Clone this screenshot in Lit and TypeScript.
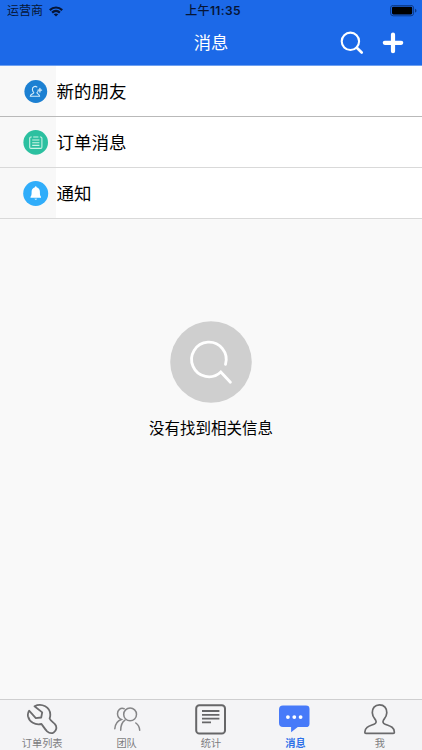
import { LitElement, html, css, svg } from "lit";
import { customElement } from "lit/decorators.js";

const wifi = svg`<svg class="wifi" width="14" height="11" viewBox="0 0 14 11" fill="none" stroke="#061536" stroke-width="2.2">
  <path d="M.8 4.1C4.4.6 9.6.6 13.2 4.1"/><path d="M3.1 6.6C5.4 4.4 8.6 4.4 10.9 6.6"/>
  <path d="M7 10.6L4.7 8.3Q7 6.5 9.3 8.3Z" fill="#061536" stroke="none"/></svg>`;

const battery = svg`<svg class="battery" width="27" height="12" viewBox="0 0 27 12">
  <rect x=".6" y=".4" width="23" height="10.4" rx="2.6" fill="none" stroke="#0c3a88" stroke-width="1"/>
  <rect x="2" y="1.8" width="20.2" height="7.6" rx="1.3" fill="#000"/>
  <path d="M25 3.8Q26.5 4.4 26.5 5.7T25 7.6Z" fill="#0c3a88"/></svg>`;

const search = svg`<svg width="24" height="24" viewBox="0 0 24 24" fill="none" stroke="#fff">
  <circle cx="10.4" cy="10.3" r="8.7" stroke-width="2.1"/><path d="M16.8 16.8L21.7 21.5" stroke-width="2.7" stroke-linecap="round"/></svg>`;

const plus = svg`<svg width="22" height="22" viewBox="0 0 22 22" stroke="#fff" stroke-width="4.2" stroke-linecap="round">
  <path d="M11 2.6V19.2M2.8 10.8H19.2"/></svg>`;

const friend = svg`<svg width="26" height="26" viewBox="0 0 26 26" fill="none" stroke="#d4ebfa" stroke-width="1.1" stroke-linecap="round" stroke-linejoin="round">
  <circle cx="12.8" cy="12.5" r="11.4" fill="#1c80d2" stroke="none"/>
  <path d="M13.9 8C12 6.5 9.2 7.8 9.4 10.5C9.5 12.1 10.1 13 10.8 13.7C10.8 14.8 7.5 14.9 7.3 17.3H16.6C16.5 14.9 13.9 15 13.9 13.7C14.6 13.1 15 12.6 15.1 12"/>
  <path d="M16.9 9.3V13M15 11.1H18.6" stroke-width="1.3"/></svg>`;

const order = svg`<svg width="26" height="26" viewBox="0 0 26 26" fill="none" stroke="#c9f3e5" stroke-width="1.1" stroke-linejoin="round">
  <circle cx="12.7" cy="12.4" r="12.3" fill="#2cc0a0" stroke="none"/>
  <path d="M8.7 7H7.9Q6.7 7 6.7 8.2V17.2Q6.7 18.4 7.9 18.4H17.7Q18.9 18.4 18.9 17.2V8.2Q18.9 7 17.7 7H16.9"/>
  <path d="M10.2 7H15.4M9.2 10H16.4M9.2 12.7H16.4M9.2 15.4H16.4"/></svg>`;

const bell = svg`<svg width="26" height="26" viewBox="0 0 26 26">
  <circle cx="12.7" cy="12.5" r="12.5" fill="#30adfa"/>
  <path d="M12.7 5.2C13.3 5.2 13.6 5.6 13.6 6.2C15.8 6.8 16.9 8.5 16.9 10.8C16.9 14.1 17.1 14.6 18 15.7V16.7H7.5V15.7C8.4 14.6 8.6 14.1 8.6 10.8C8.6 8.5 9.7 6.8 11.9 6.2C11.9 5.6 12.2 5.2 12.7 5.2Z" fill="#fff"/>
  <path d="M11.4 17.8H14.2Q12.8 19.5 11.4 17.8Z" fill="#fff"/></svg>`;

const emptyIcon = svg`<svg width="82" height="82" viewBox="0 0 82 82" fill="none" stroke="#fff" stroke-width="2.8" stroke-linecap="round">
  <circle cx="41" cy="41" r="40.8" fill="#cfcfcf" stroke="none"/>
  <path d="M55.5 43.3A17.3 17.3 0 1 0 50.8 51L60.4 61.2"/></svg>`;

const wrench = svg`<svg width="34" height="32" viewBox="0 0 34 32" fill="none" stroke="#6c6c6e" stroke-width="1.8" stroke-linejoin="round">
  <path d="M9.5 3.2C17 -.5 25.3 4.4 25.3 11.7C25.3 13.3 25 14.3 24.6 15.5C25.6 17.9 28.6 19.6 30.1 21.4C32.3 24 31.4 27.7 28.7 29.4C26.4 30.8 24 30 22.1 28.3C20 26.2 18.4 23.7 16.5 21C10 22.4 4.4 19.1 3 13.2C2.6 11.2 3.1 9.2 4.1 7.7L10.8 15.1L16.2 14.5L17.2 9.4Z"/></svg>`;

const team = svg`<svg width="34" height="32" viewBox="0 0 34 32" fill="none" stroke="#858587" stroke-width="1.5" stroke-linecap="round">
  <circle cx="20.1" cy="11.4" r="6.4"/><path d="M14.2 5.7C10.5 4.2 7.4 7.2 7.5 10.8C7.6 13.5 9 15.5 11.3 16.5C7.4 18 5.1 21 4.8 25.8M15 17.2C12.1 19.1 10.8 22.2 10.7 27.2M25.8 20C28.3 21.8 29.5 24.4 29.7 27.2"/></svg>`;

const stats = svg`<svg width="34" height="32" viewBox="0 0 34 32" fill="none" stroke="#666668">
  <rect x="2.2" y="2.2" width="28.8" height="28.4" rx="3.2" stroke-width="2"/>
  <path d="M8 8H25.4M8 11.8H25.4M8 15.6H25.4M8 19.4H17" stroke-width="1.8"/></svg>`;

const message = svg`<svg width="34" height="32" viewBox="0 0 34 32">
  <path d="M5 2.6H28Q31.5 2.6 31.5 6V20.7Q31.5 24.1 28 24.1H19.8L13.1 29.2V24.1H5Q1 24.1 1 20.1V6.6Q1 2.6 5 2.6Z" fill="#477af9"/>
  <g fill="#fff"><circle cx="9.9" cy="14.1" r="1.9"/><circle cx="16.3" cy="14.1" r="1.9"/><circle cx="22.6" cy="14.1" r="1.9"/></g></svg>`;

const me = svg`<svg width="34" height="32" viewBox="0 0 34 32" fill="none" stroke="#69696b" stroke-width="1.7" stroke-linejoin="round">
  <path d="M16.5 1.9C11.7 1.9 9.2 5.2 9.3 9.7C9.4 13.4 10.9 14.9 12.5 16.9C13.7 18.7 13.1 20.4 11 21.2C6 23.1 2 24 1.8 29.2Q1.8 30.4 3 30.4H30.2Q31.4 30.4 31.4 29.2C31.2 24 27.2 23.1 22.1 21.2C20 20.4 19.4 18.7 20.6 16.9C22.2 14.9 23.7 13.4 23.8 9.7C23.9 5.2 21.3 1.9 16.5 1.9Z"/></svg>`;

const rows = [
  { icon: friend, label: "新的朋友" },
  { icon: order, label: "订单消息" },
  { icon: bell, label: "通知" },
];
const tabs = [
  { icon: wrench, label: "订单列表" },
  { icon: team, label: "团队" },
  { icon: stats, label: "统计" },
  { icon: message, label: "消息", active: true },
  { icon: me, label: "我" },
];

@customElement("app-root")
export class AppRoot extends LitElement {
  static styles = css`
    :host {
      display: flex;
      flex-direction: column;
      width: 100%;
      height: 100vh;
      overflow: hidden;
      background: #f9f9f9;
      color: #000;
      font-family: "Liberation Sans", "Noto Sans CJK SC", sans-serif;
    }
    * { box-sizing: border-box; }
    svg { display: block; flex: none; }
    header { flex: none; height: 66px; background: #1c69e8; border-bottom: 1px solid #6ea0f0; }
    .status, .nav { display: grid; grid-template-columns: 1fr auto 1fr; align-items: center; }
    .status {
      height: 22px;
      padding: 0 5px 0 7px;
      color: #061536;
      font: 12px/22px Inter, "Noto Sans CJK SC", sans-serif;
    }
    .carrier { display: flex; align-items: center; gap: 6px; }
    .time { font-weight: 500; letter-spacing: 0.35px; padding-left: 2px; }
    .digits { font-weight: 600; }
    .battery { justify-self: end; }
    .nav { height: 42px; padding: 0 18px; }
    .title { grid-column: 2; color: #fff; font-size: 17.3px; line-height: 42px; }
    .actions { display: flex; justify-content: flex-end; align-items: center; gap: 18px; }
    .row {
      display: flex;
      height: 51px;
      border-bottom: 1px solid #d9d9d9;
      background: #fff;
      flex: none;
    }
    .row:first-of-type { border-bottom-color: #b9b9b9; }
    .lead { width: 56px; padding: 13px 0 0 22.5px; background: #f8f8f8; }
    .label { padding-left: 0.5px; font-size: 17.5px; line-height: 52px; }
    .empty { flex: 1; display: flex; flex-direction: column; align-items: center; padding-top: 102px; }
    .hint { margin-top: 14px; font-size: 15.5px; line-height: 24px; }
    nav {
      flex: none;
      display: grid;
      grid-template-columns: repeat(5, 1fr);
      height: 51px;
      border-top: 1px solid #cfcfd0;
      background: #f4f4f6;
    }
    .tab { display: flex; flex-direction: column; align-items: center; padding-top: 3px; color: #7d7d80; }
    .caption { font-size: 10.2px; line-height: 14px; margin-top: 2px; }
    .active { color: #2c6fe8; font-weight: 700; }
  `;

  render() {
    return html`
      <header>
        <div class="status">
          <div class="carrier">运营商${wifi}</div>
          <div class="time">上午<span class="digits">11:35</span></div>
          ${battery}
        </div>
        <div class="nav">
          <div class="title">消息</div>
          <div class="actions">${search}${plus}</div>
        </div>
      </header>
      ${rows.map((r) => html`<div class="row"><div class="lead">${r.icon}</div><div class="label">${r.label}</div></div>`)}
      <main class="empty">${emptyIcon}<div class="hint">没有找到相关信息</div></main>
      <nav>
        ${tabs.map((t) => html`<div class="tab ${t.active ? "active" : ""}">${t.icon}<div class="caption">${t.label}</div></div>`)}
      </nav>
    `;
  }
}
